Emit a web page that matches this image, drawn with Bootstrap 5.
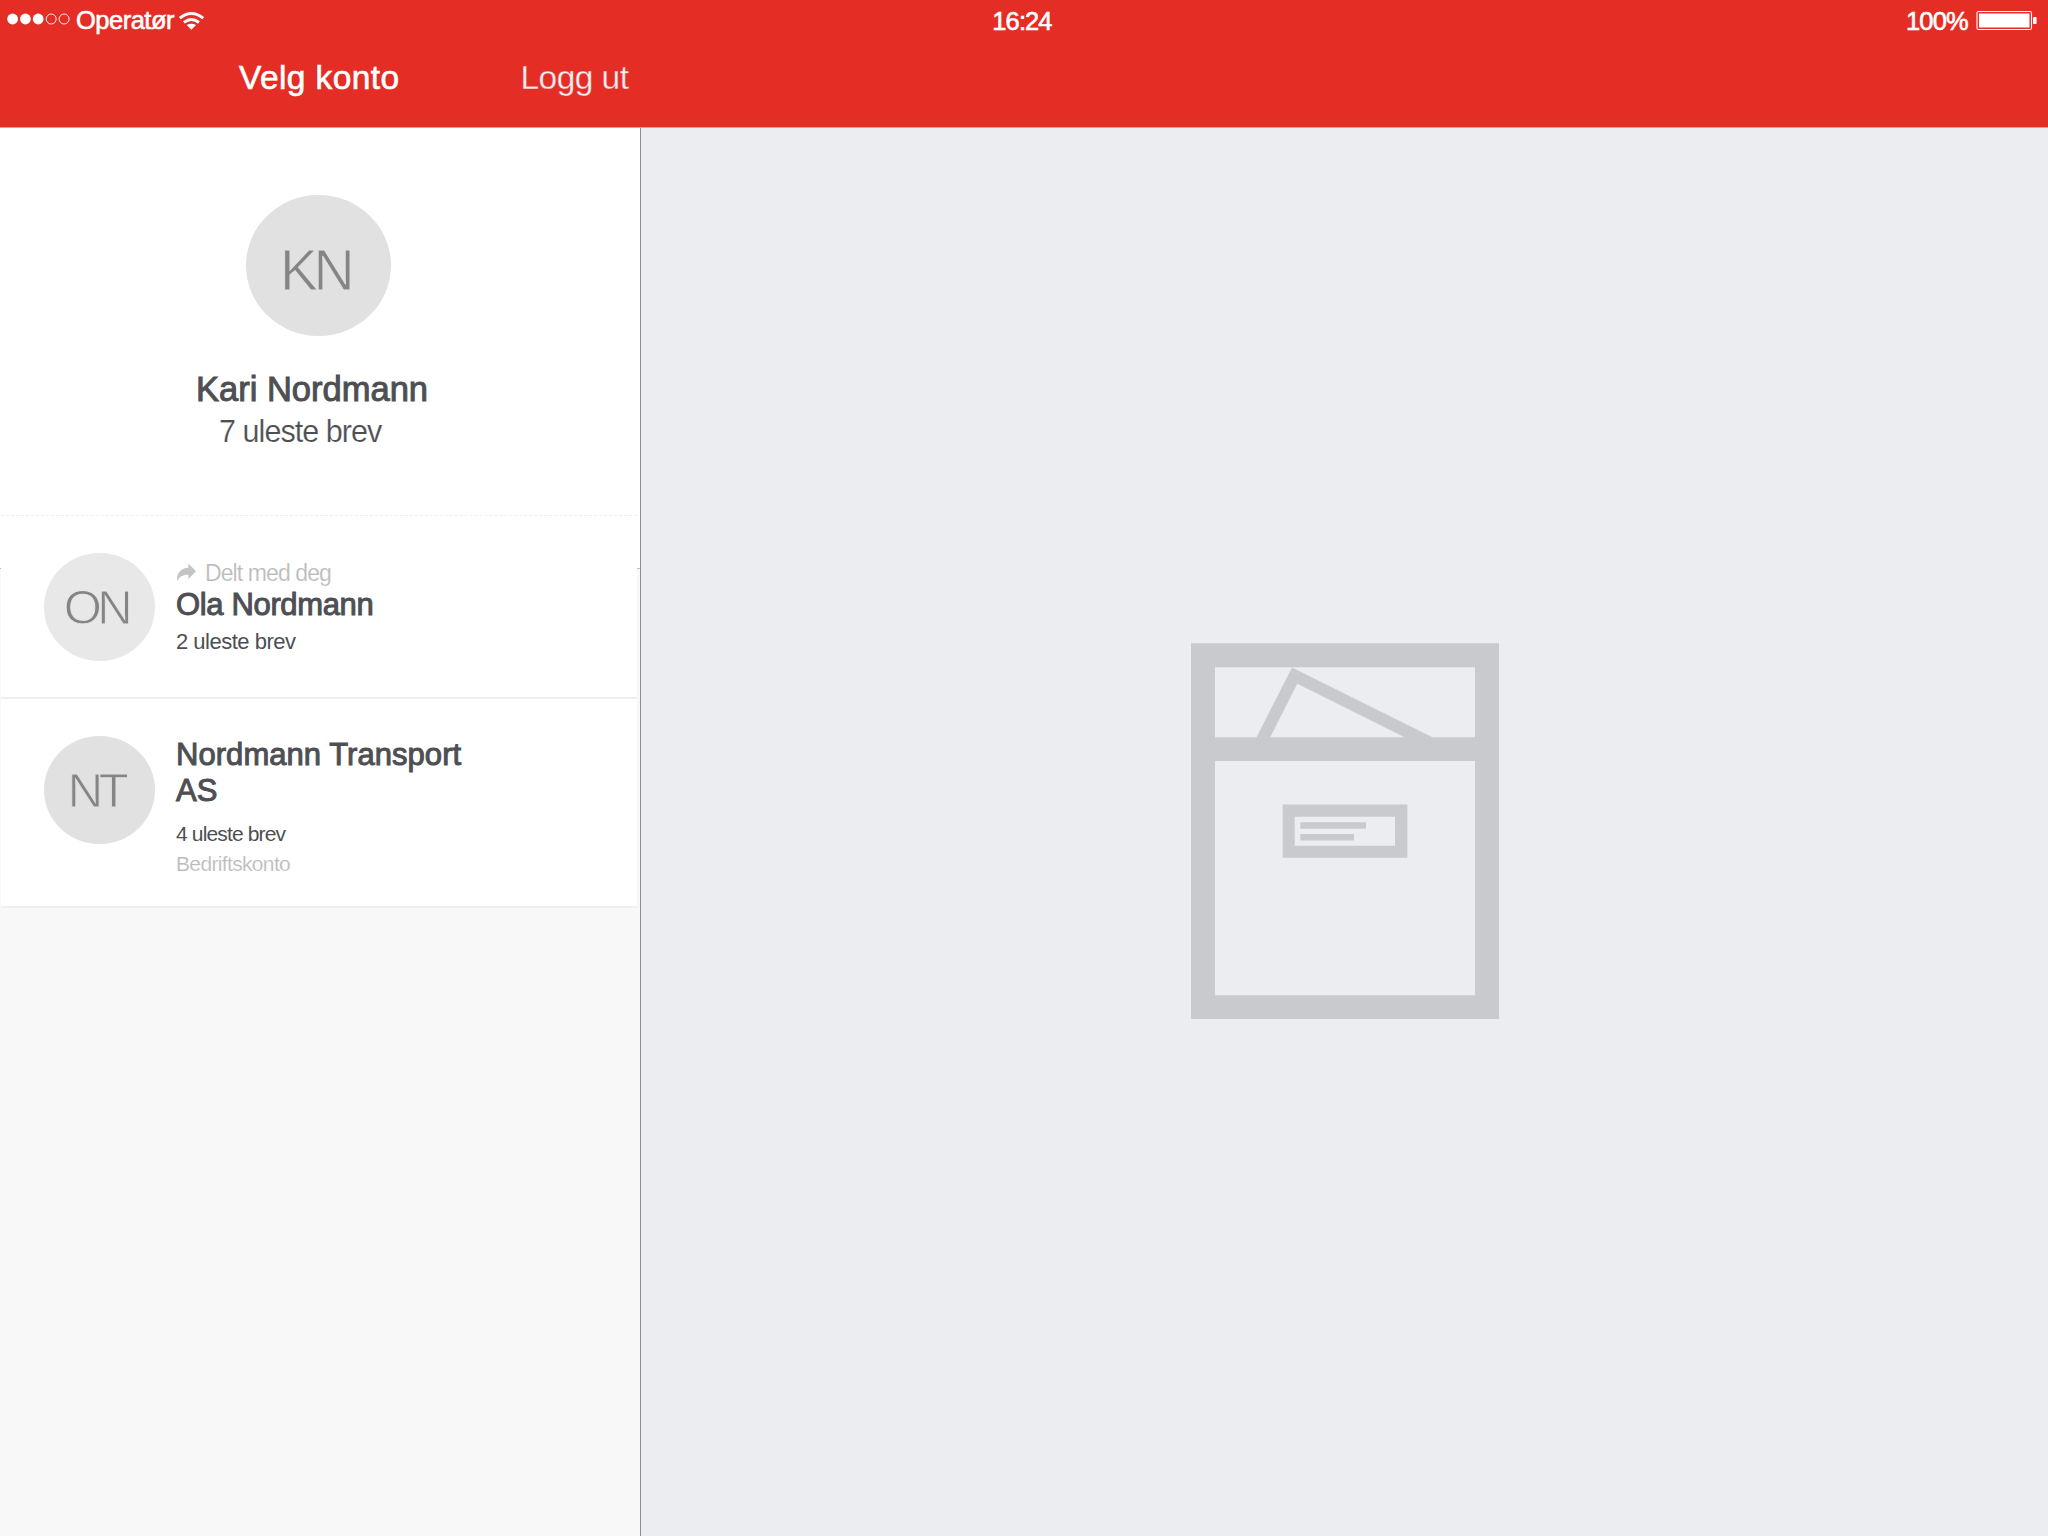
<!DOCTYPE html>
<html lang="nb">
<head>
<meta charset="utf-8">
<meta name="viewport" content="width=device-width, initial-scale=1">
<title>Velg konto</title>
<link href="https://cdn.jsdelivr.net/npm/bootstrap@5.3.0/dist/css/bootstrap.min.css" rel="stylesheet">
<style>
  body { font-family: "Liberation Sans", Arial, sans-serif; color: #4d4f53; height: 1536px; overflow: hidden; background: #ecedf1; }
  svg { display: block; flex: none; }
  .topbar { height: 128px; background: #e42d24; color: #fff; border-bottom: 1px solid #c5aaa9; }
  .status { height: 42px; font-size: 25.5px; line-height: 42px; }
  .status > div { flex: 1 1 0; }
  .medium-s { -webkit-text-stroke: .6px currentColor; }
  .medium { -webkit-text-stroke: 1px currentColor; }
  .operator { letter-spacing: -.5px; line-height: 41px; }
  .clock { letter-spacing: -.9px; }
  .percent { letter-spacing: -.8px; }
  .titles { line-height: 72px; font-size: 33.5px; }
  .page-name { margin-left: 239px; letter-spacing: .4px; }
  .logout { margin-left: 121px; color: #f3eef4; text-decoration: none; letter-spacing: -.55px; -webkit-text-stroke: .3px #e42d24; }
  .sidebar { width: 641px; background: #f8f8f8; border-right: 1px solid #8e8e93; }
  .profile { height: 441px; background: #fff; border-bottom: 1px solid #c0c0c0; }
  .account { background: #fff; margin: 0 3px 0 1px; border-bottom: 2px solid #efefef; padding-left: 43px; }
  .account.first { margin-top: -54px; height: 184px; border-top: 1px dashed #efefef; padding-top: 37px; position: relative; }
  .account.second { height: 209px; padding-top: 37px; }
  .initials { border-radius: 50%; background: #e1e1e1; color: #858585; flex: none; -webkit-text-stroke: .9px #e1e1e1; }
  .initials.big { width: 145px; height: 141px; margin: 67px 0 32px 246px; font-size: 57px; letter-spacing: -4.5px; padding: 10px 7px 0 0; }
  .initials.sm { width: 111px; height: 108px; font-size: 49px; letter-spacing: -4.5px; padding: 1px 7px 0 0; margin-right: 21px; }
  .initials.pale { background: #e8e8e8; -webkit-text-stroke-color: #e8e8e8; }
  .thin { -webkit-text-stroke: .2px #fff; }
  .main-name { font-size: 34.5px; line-height: 42px; padding-left: 196px; letter-spacing: 0; }
  .main-count { font-size: 30.5px; line-height: 42px; padding-left: 219px; letter-spacing: -.95px; }
  .first-text { padding-top: 6px; }
  .acc-name { font-size: 31px; line-height: 36px; letter-spacing: -.35px; }
  .company { letter-spacing: .05px; padding-top: 1px; }
  .shared { font-size: 23px; line-height: 28px; color: #bababa; letter-spacing: -.9px; }
  .count { font-size: 22px; line-height: 28px; letter-spacing: -.5px; padding-top: 5px; }
  .count-sm { font-size: 21px; line-height: 30px; letter-spacing: -.85px; }
  .unread { padding-top: 10px; }
  .kind { color: #bababa; letter-spacing: -.65px; }
  .mailbox { margin-bottom: 2px; }
</style>
<script src="https://cdn.jsdelivr.net/npm/bootstrap@5.3.0/dist/js/bootstrap.bundle.min.js"></script>
</head>
<body class="d-flex flex-column">
<header class="topbar">
  <div class="status d-flex">
    <div class="d-flex">
      <svg width="76" height="42" fill="#fff" stroke="#fff">
        <g stroke="none"><circle cx="12.6" cy="19" r="5.4"/><circle cx="25.4" cy="19" r="5.4"/><circle cx="38.2" cy="19" r="5.4"/></g>
        <g fill="none" stroke-width=".9"><circle cx="51.2" cy="19" r="5"/><circle cx="64.1" cy="19" r="5"/></g>
      </svg>
      <span class="operator medium-s">Operatør</span>
      <svg class="ms-1" width="26" height="42" viewBox="178.4 0 26 42" fill="none" stroke="#fff" stroke-width="2.9">
        <path d="M180.2 18.2Q191.8 8.8 203.6 18.2M184.3 22.5Q191.8 16.4 199.4 22.5"/>
        <path fill="#fff" stroke="none" d="M187 25.1Q191.8 22.2 196.5 25.1L191.8 29.8Z"/>
      </svg>
    </div>
    <div class="clock medium-s text-center pe-1">16:24</div>
    <div class="d-flex justify-content-end">
      <span class="percent medium-s">100%</span>
      <svg width="80" height="42" viewBox="1968 0 80 42" fill="#fff">
        <rect x="1977" y="11.5" width="54.5" height="18" rx="1.5" fill="none" stroke="#fff" stroke-width="1.1"/>
        <rect x="1979" y="13.5" width="50.5" height="14"/><rect x="2033" y="17" width="3.6" height="7" rx="1"/>
      </svg>
    </div>
  </div>
  <nav class="titles d-flex">
    <span class="page-name medium-s">Velg konto</span>
    <a class="logout" href="#">Logg ut</a>
  </nav>
</header>
<div class="d-flex flex-grow-1">
  <aside class="sidebar flex-shrink-0">
    <section class="profile d-flex flex-column">
      <div class="initials big d-flex align-items-center justify-content-center">KN</div>
      <div class="main-name medium">Kari Nordmann</div>
      <div class="main-count thin">7 uleste brev</div>
    </section>
    <section class="account first d-flex align-items-start">
      <div class="initials sm pale d-flex align-items-center justify-content-center">ON</div>
      <div class="first-text">
        <div class="shared thin d-flex">
          <svg width="29" height="28" viewBox="176 559.5 29 28"><path fill="#c4c4c4" d="M188.4 564L196 571.8L188.4 579.5V575.3C183 575 179.5 577 177.2 581.8C176.2 574 180.5 568.5 188.4 568.2Z"/></svg>
          <span>Delt med deg</span>
        </div>
        <div class="acc-name medium">Ola Nordmann</div>
        <div class="count">2 uleste brev</div>
      </div>
    </section>
    <section class="account second d-flex align-items-start">
      <div class="initials sm d-flex align-items-center justify-content-center">NT</div>
      <div>
        <div class="acc-name company medium">Nordmann Transport<br>AS</div>
        <div class="count-sm unread">4 uleste brev</div>
        <div class="count-sm kind thin">Bedriftskonto</div>
      </div>
    </section>
  </aside>
  <main class="flex-grow-1 d-flex align-items-center justify-content-center">
    <svg class="mailbox" width="310" height="378" viewBox="1190 642 310 378" fill="#c9cace">
      <path fill-rule="evenodd" d="M1191 643.3H1499V1019H1191ZM1215 667.2V737.2H1475V667.2ZM1215 761V995.2H1475V761Z"/>
      <path d="M1256.3 737.7L1292 667.5L1433.5 737.7H1405.5L1297.3 683.7L1270 737.7Z"/>
      <path fill-rule="evenodd" d="M1282.7 804.5H1407.4V857.8H1282.7ZM1294.7 816.7V845.7H1395V816.7Z"/>
      <path d="M1300.3 822.2H1366V828.8H1300.3ZM1300.3 834H1354V840.5H1300.3Z"/>
    </svg>
  </main>
</div>
</body>
</html>
